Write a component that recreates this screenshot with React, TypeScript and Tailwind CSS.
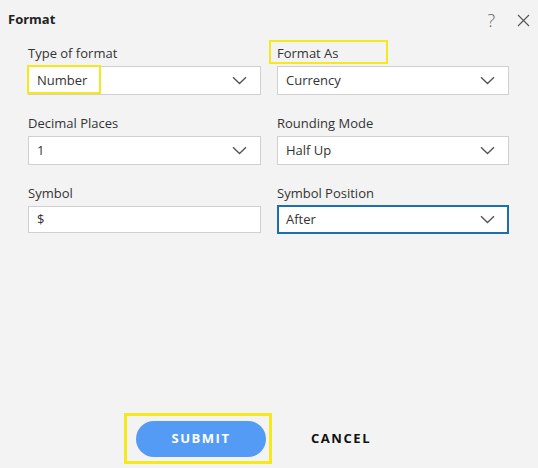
import React from "react";

const Chevron = () => (
  <svg width="15" height="9" viewBox="0 0 15 9" fill="none" className="shrink-0">
    <polyline points="1,1.2 7.5,7.5 14,1.2" stroke="#555" strokeWidth="1.4" fill="none" />
  </svg>
);

const Select = ({ value, focused }: { value: string; focused?: boolean }) => (
  <div
    className={
      focused
        ? "flex h-[29px] items-center justify-between border-2 border-[#1c6fae] bg-white pl-[7px] pr-[12px]"
        : "flex h-[29px] items-center justify-between border border-[#d0d0d0] bg-white pl-[8px] pr-[13px]"
    }
  >
    <span className="text-[13px] text-[#333]">{value}</span>
    <Chevron />
  </div>
);

const Field = ({ label, children }: { label: string; children: React.ReactNode }) => (
  <div className="flex flex-col">
    <div className="h-[18px] text-[13px] leading-[18px] text-[#333]">{label}</div>
    <div className="mt-[4px]">{children}</div>
  </div>
);

export default function App() {
  return (
    <div
      className="relative flex h-[468px] w-[538px] flex-col bg-[#f3f3f3]"
      style={{ fontFamily: '"Open Sans", "Noto Sans", sans-serif' }}
    >
      <div className="flex h-[40px] items-center justify-between pl-[8px] pr-[8px]">
        <span className="text-[13px] font-bold text-[#222]">Format</span>
        <div className="flex items-center gap-[22px] text-[#666]">
          <span className="text-[18px] font-light leading-none">?</span>
          <svg width="13" height="13" viewBox="0 0 13 13">
            <path d="M1 1 L12 12 M12 1 L1 12" stroke="#555" strokeWidth="1.1" />
          </svg>
        </div>
      </div>

      <div className="grid grid-cols-[233px_232px] gap-x-[16px] gap-y-[19px] pl-[28px] pt-[4px]">
        <Field label="Type of format">
          <Select value="Number" />
        </Field>
        <Field label="Format As">
          <Select value="Currency" />
        </Field>
        <Field label="Decimal Places">
          <Select value="1" />
        </Field>
        <Field label="Rounding Mode">
          <Select value="Half Up" />
        </Field>
        <Field label="Symbol">
          <div className="flex h-[27px] items-center border border-[#d0d0d0] bg-white pl-[8px]">
            <span className="text-[13px] text-[#333]">$</span>
          </div>
        </Field>
        <Field label="Symbol Position">
          <div className="-mt-[1px]">
            <Select value="After" focused />
          </div>
        </Field>
      </div>

      <div className="mt-auto flex items-center pb-[4px] pl-[124px]">
        <div className="border-[3px] border-[#f5e81c] pb-[4px] pl-[9px] pr-[3px] pt-[5px]">
          <button className="flex h-[36px] w-[130px] items-center justify-center rounded-full bg-[#539bf5] text-[13px] font-bold tracking-[0.12em] text-white">
            SUBMIT
          </button>
        </div>
        <span className="ml-[39px] text-[13px] font-bold tracking-[0.12em] text-[#111]">CANCEL</span>
      </div>

      <div className="pointer-events-none absolute left-[27px] top-[65px] h-[29px] w-[74px] border-2 border-[#f5e81c]" />
      <div className="pointer-events-none absolute left-[269px] top-[40px] h-[24px] w-[119px] border-2 border-[#f5e81c]" />
    </div>
  );
}
